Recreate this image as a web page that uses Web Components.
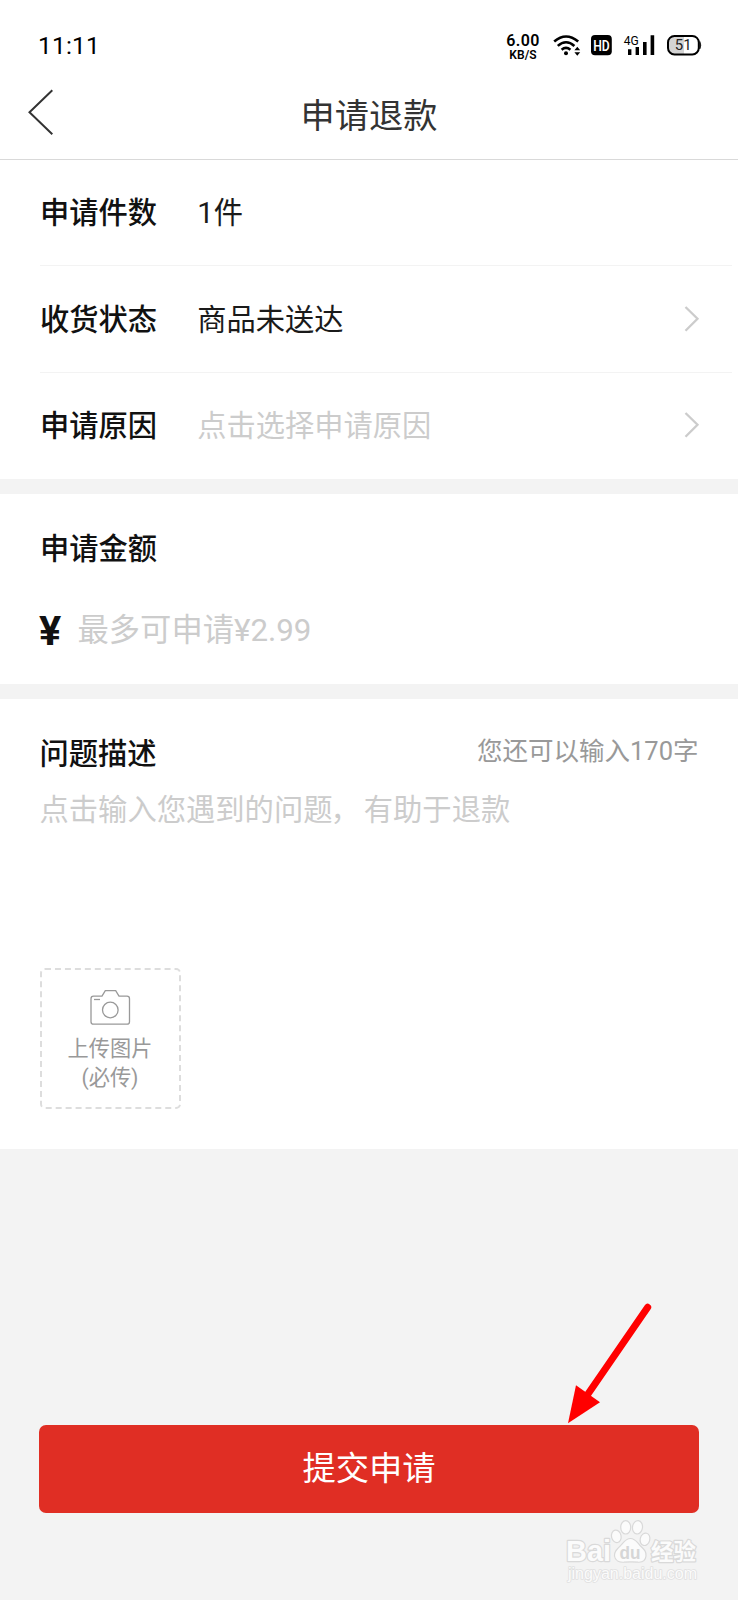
<!DOCTYPE html>
<html lang="zh-CN">
<head>
<meta charset="utf-8">
<title>申请退款</title>
<style>
html,body{margin:0;padding:0}
body{width:738px;height:1600px;overflow:hidden;background:#f3f3f3;font-family:Roboto,"Noto Sans CJK SC",sans-serif}
</style>
</head>
<body>
<refund-page></refund-page>
<script>
function define(name, html) {
  const t = document.createElement('template');
  t.innerHTML = html;
  customElements.define(name, class extends HTMLElement {
    constructor() {
      super();
      this.attachShadow({mode: 'open'}).append(t.content.cloneNode(true));
    }
  });
}

define('status-bar', `
<style>
:host{display:flex;justify-content:space-between;align-items:flex-start;height:70px;box-sizing:border-box;padding:30px 36px 0 38px;color:#000}
.time{font-size:24.5px;line-height:30px;letter-spacing:.2px;margin-top:1px}
.right{display:flex;align-items:flex-start}
.speed{width:34px;text-align:center;font-weight:600;margin-right:11px;padding-top:2px}
.speed div{font-size:16px;line-height:17px;white-space:nowrap;letter-spacing:.4px}
.speed div+div{font-size:12px;line-height:12px;letter-spacing:.1px;font-weight:600}
svg{display:block}
</style>
<span class="time">11:11</span>
<div class="right">
<div class="speed"><div>6.00</div><div>KB/S</div></div>
<svg width="151" height="30" viewBox="551 30 151 30" font-family="Roboto,sans-serif">
<g fill="none" stroke="#000" stroke-width="2.6">
<path d="M554.2 41.6Q566 31.4 578.2 41.6"/>
<path d="M557.8 45.9Q566 38.6 574.4 45.9"/>
<path d="M561.6 49.7Q566 46 570.4 49.700"/>
</g>
<circle cx="566" cy="53.2" r="2"/>
<path d="M574.4 50.300l2.900-3.600 2.900 3.600zM574.400 52.300l2.900 3.400 2.900-3.400z"/>
<rect x="591" y="35" width="20.800" height="20.300" rx="4"/>
<text x="601.400" y="50.600" fill="#fff" font-size="15" font-weight="600" text-anchor="middle" textLength="16.500" lengthAdjust="spacingAndGlyphs">HD</text>
<text x="623.800" y="45.400" font-size="13.500" font-weight="400" textLength="15" lengthAdjust="spacingAndGlyphs">4G</text>
<path d="M628 49.300h3.400v5.800h-3.400zM635.600 47h3.400v8.100h-3.400zM643 42h3.600v13.100h-3.600zM650.600 35.200h3.600v19.900h-3.600z"/>
<path d="M684 36v18.400h-9.600q-6.500 0-6.500-6.500v-5.400q0-6.500 6.500-6.500z" fill="#d4d4d4"/>
<rect x="668" y="36" width="30.800" height="18.400" rx="6.500" fill="none" stroke="#000" stroke-width="2"/>
<path d="M699.800 41.400q2 3.800 0 7.600z" stroke="#000" stroke-width=".6"/>
<text x="683.300" y="50.400" font-size="15" text-anchor="middle" fill="#222">51</text>
</svg>
</div>`);

define('nav-bar', `
<style>
:host{display:grid;grid-template-columns:60px 1fr 60px;height:90px;box-sizing:border-box;border-bottom:1px solid #d9d9d9;color:#333}
svg{display:block;margin:18px 0 0 26px}
h1{margin:21px 0 0;font-size:34.2px;line-height:50px;font-weight:400;text-align:center}
</style>
<svg width="30" height="50" viewBox="26 88 30 50"><path d="M52.3 90.3L29.5 112.2 52.3 134.2" fill="none" stroke="#333" stroke-width="2"/></svg>
<h1><slot></slot></h1>`);

define('form-row', `
<style>
:host{display:flex;align-items:center;height:106.4px;box-sizing:border-box;margin:0 6px 0 40px;padding:1px 32px 0 0;border-bottom:1px solid #f3f3f3;font-size:29.25px;line-height:42px;color:#1a1a1a}
:host([last]){border-bottom:0}
.label{width:157.3px;font-weight:500;color:#111}
.value{flex:1}
:host([placeholder]) .value{color:#ccc}
svg{display:none;margin-top:-2px}
:host([link]) svg{display:block}
</style>
<span class="label"><slot name="label"></slot></span>
<span class="value"><slot></slot></span>
<svg width="16" height="28" viewBox="0 0 16 28"><path d="M1.5 2L13.5 13.8 1.5 25.8" fill="none" stroke="#ccc" stroke-width="2.3"/></svg>`);

define('form-card', `
<style>
:host{display:block;background:#fff;box-sizing:border-box;margin-bottom:15px}
</style><slot></slot>`);

define('amount-field', `
<style>
:host{display:block;height:190px;box-sizing:border-box;padding:34px 40px 0 39px}
.label{font-size:29.25px;line-height:42px;font-weight:500;color:#111;padding-left:1px}
.line{display:flex;align-items:center;margin-top:36px;height:50px}
b{font-size:41.500px;line-height:50px;width:38.500px;color:#111}
span{font-size:31.3px;line-height:50px;color:#ccc}
</style>
<div class="label"><slot name="label"></slot></div>
<div class="line"><b>¥</b><span><slot></slot></span></div>`);

define('upload-tile', `
<style>
:host{display:flex;flex-direction:column;align-items:center;width:141px;height:141px;box-sizing:border-box;border:2px dashed #ddd;border-radius:5px;padding-top:18px;color:#999;font-size:21.200px;line-height:29.5px;text-align:center}
svg{display:block;margin-bottom:8px}
</style>
<svg width="44" height="38" viewBox="88 988 44 38" fill="none" stroke="#999" stroke-width="1.3">
<path d="M93.5 996.2H102l3.3-5.5h10.4l3.3 5.5h8q2.500 0 2.500 2.500v23q0 2.500-2.500 2.500H93.500q-2.500 0-2.500-2.500v-23q0-2.500 2.500-2.500z"/>
<circle cx="110.300" cy="1010" r="7.800"/><path d="M94 999.500h6"/></svg>
<slot></slot>`);

define('problem-field', `
<style>
:host{display:block;height:450px;box-sizing:border-box;padding:34px 39.500px 0}
.head{display:flex;justify-content:space-between}
.label{font-size:29.250px;line-height:42px;font-weight:500;color:#111}
.count{font-size:25.500px;line-height:36px;color:#999}
.text{height:178.500px;margin-top:14px;font-size:29.300px;line-height:42px;color:#ccc;white-space:nowrap}
</style>
<div class="head"><span class="label"><slot name="label"></slot></span><span class="count"><slot name="count"></slot></span></div>
<div class="text"><slot></slot></div>
<slot name="upload"></slot>`);

define('submit-button', `
<style>
:host{display:flex;align-items:center;justify-content:center;height:88px;margin:276px 39.300px 0;border-radius:7px;background:#e02e24;color:#fff;font-size:33.300px;line-height:48px}
</style><slot></slot>`);

define('pointer-arrow', `
<style>:host{position:absolute;left:560px;top:1296px}svg{display:block}</style>
<svg width="100" height="132" viewBox="560 1296 100 132"><path d="M647.700 1307.300L588 1394" stroke="#f00" stroke-width="7" stroke-linecap="round"/><path d="M568 1423.300l8-38 24 17z" fill="#f00"/></svg>`);

define('site-watermark', `
<style>:host{position:absolute;left:560px;top:1515px}svg{display:block}text{paint-order:stroke}</style>
<svg width="145" height="80" viewBox="560 1515 145 80" font-family="'Liberation Sans','Noto Sans CJK SC',sans-serif" fill="#fbfbfb" stroke="#d9d9d9" stroke-width="2.400" stroke-linejoin="round">
<text x="566" y="1561" font-size="30" font-weight="700" textLength="45" lengthAdjust="spacingAndGlyphs">Bai</text>
<g stroke-width="1.200">
<ellipse cx="616.300" cy="1536.300" rx="4.800" ry="6.300" transform="rotate(-12 616.300 1536.300)"/>
<ellipse cx="625.700" cy="1527.300" rx="5" ry="6.700"/>
<ellipse cx="637.500" cy="1527.300" rx="5" ry="6.700" transform="rotate(8 637.500 1527.300)"/>
<ellipse cx="645" cy="1539.300" rx="4.800" ry="6.300" transform="rotate(15 645 1539.300)"/>
<path d="M630.500 1538.500c5 0 6.500 4 10 7.500 3.500 3.300 6 5.500 5.500 10-.5 4.500-4 6.500-8 6.200-5-.5-9-.5-14 0-4.500.3-9-1.500-9.500-6.200-.4-4.500 2.500-7 6-10.300 3.500-3.500 5-7.200 10-7.200z"/>
</g>
<text x="619.500" y="1558.500" font-size="19" font-weight="700" fill="#d6d6d6" stroke="none" textLength="21" lengthAdjust="spacingAndGlyphs">du</text>
<text x="651" y="1559.500" font-size="22.500" font-weight="700" textLength="45" font-family="'Noto Sans CJK SC',sans-serif">经验</text>
<text x="568" y="1579" font-size="16" stroke-width="1.600" stroke="#e0e0e0" textLength="129" lengthAdjust="spacingAndGlyphs">jingyan.baidu.com</text>
</svg>`);

define('refund-page', `
<style>
:host{display:block;position:relative;width:738px;height:1600px;overflow:hidden;background:#f3f3f3}
header{background:#fff}
.rows{height:319px;overflow:hidden}
form-card:last-of-type{margin-bottom:0}
.comma{margin:0 4px 0 -2px}
</style>
<header><status-bar></status-bar><nav-bar>申请退款</nav-bar></header>
<form-card class="rows">
<form-row><span slot="label">申请件数</span>1件</form-row>
<form-row link><span slot="label">收货状态</span>商品未送达</form-row>
<form-row link placeholder last><span slot="label">申请原因</span>点击选择申请原因</form-row>
</form-card>
<form-card><amount-field><span slot="label">申请金额</span>最多可申请¥2.99</amount-field></form-card>
<form-card><problem-field>
<span slot="label">问题描述</span><span slot="count">您还可以输入170字</span>点击输入您遇到的问题<span class="comma">，</span>有助于退款
<upload-tile slot="upload"><div>上传图片</div><div>(必传)</div></upload-tile>
</problem-field></form-card>
<submit-button>提交申请</submit-button>
<pointer-arrow></pointer-arrow>
<site-watermark></site-watermark>`);
</script>
</body>
</html>
